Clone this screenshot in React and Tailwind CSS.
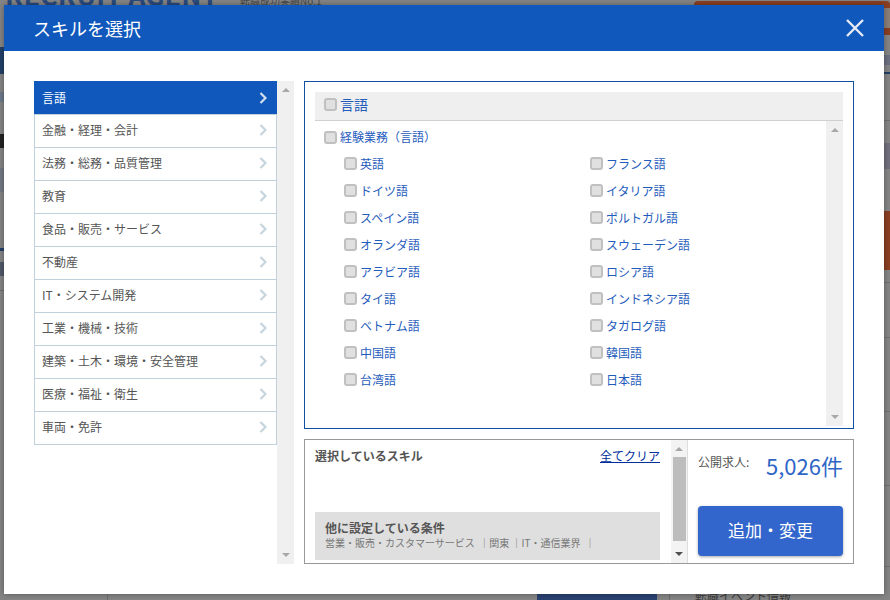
import React from "react";

const categories = [
  "言語",
  "金融・経理・会計",
  "法務・総務・品質管理",
  "教育",
  "食品・販売・サービス",
  "不動産",
  "IT・システム開発",
  "工業・機械・技術",
  "建築・土木・環境・安全管理",
  "医療・福祉・衛生",
  "車両・免許",
];

const languages = [
  ["英語", "フランス語"],
  ["ドイツ語", "イタリア語"],
  ["スペイン語", "ポルトガル語"],
  ["オランダ語", "スウェーデン語"],
  ["アラビア語", "ロシア語"],
  ["タイ語", "インドネシア語"],
  ["ベトナム語", "タガログ語"],
  ["中国語", "韓国語"],
  ["台湾語", "日本語"],
];

const Check = () => (
  <span className="block w-[13px] h-[13px] shrink-0 rounded-[3px] border-2 border-[#c0c0c0] bg-[#e0e0e0]" />
);

const Chevron = ({ color }) => (
  <svg width="8" height="12" viewBox="0 0 8 12" fill="none">
    <path d="M1.5 1l5 5-5 5" stroke={color} strokeWidth="2.2" />
  </svg>
);

const Arrow = ({ down, color = "#a8a8a8" }) => (
  <svg width="8" height="4" viewBox="0 0 8 4">
    <path d={down ? "M0 0h8L4 4z" : "M0 4h8L4 0z"} fill={color} />
  </svg>
);

const LangItem = ({ label }) => (
  <div className="flex items-center gap-[3px] h-[27px]">
    <Check />
    <a className="text-[12px] text-[#1f5cbc]">{label}</a>
  </div>
);

// 背景のページ（オーバーレイで暗くなっている部分）
const Backdrop = () => (
  <>
    <div className="absolute left-[5px] top-[-19px] text-[27px] leading-[28px] font-bold text-[#2a4a7e] whitespace-nowrap">
      RECRUIT AGENT
    </div>
    <div className="absolute left-[240px] top-[-6px] text-[10px] leading-[14px] text-[#4a4a4a] whitespace-nowrap">
      転職成功実績No.1
    </div>
    <div className="absolute left-[694px] top-[1px] w-[196px] h-[34px] rounded-t-[4px] bg-[#8b3f22]" />
    <div className="absolute left-[884px] top-[8px] w-[6px] h-[20px] bg-[#8c8078]" />
    <div className="absolute left-0 top-[47px] w-[4px] h-[27px] bg-[#234069]" />
    <div className="absolute left-0 top-[92px] w-[4px] h-[10px] bg-[#6d7a8c]" />
    <div className="absolute left-0 top-[134px] w-[4px] h-[14px] bg-[#222222]" />
    <div className="absolute left-0 top-[168px] w-[4px] h-[24px] bg-[#747a84]" />
    <div className="absolute left-0 top-[248px] w-[4px] h-[3px] bg-[#234069]" />
    <div className="absolute left-0 top-[262px] w-[4px] h-[14px] bg-[#50586a]" />
    <div className="absolute left-0 top-[290px] w-[4px] h-px bg-[#6e6e6e]" />
    <div className="absolute left-[884px] top-[55px] w-[6px] h-[10px] bg-[#6d7080]" />
    <div className="absolute left-[884px] top-[72px] w-[6px] h-[2px] bg-[#234069]" />
    <div className="absolute left-[884px] top-[120px] w-[6px] h-px bg-[#707070]" />
    <div className="absolute left-[884px] top-[143px] w-[6px] h-[26px] bg-[#72707e]" />
    <div className="absolute left-[884px] top-[211px] w-[6px] h-[59px] bg-[#8b3f22]" />
    <div className="absolute left-[884px] top-[282px] w-[6px] h-px bg-[#707070]" />
    <div className="absolute left-[884px] top-[337px] w-[6px] h-px bg-[#707070]" />
    <div className="absolute left-[884px] top-[411px] w-[6px] h-px bg-[#707070]" />
    <div className="absolute left-[884px] top-[485px] w-[6px] h-px bg-[#707070]" />
    <div className="absolute left-[884px] top-[566px] w-[6px] h-px bg-[#707070]" />
    <div className="absolute left-[107px] top-[594px] w-px h-[6px] bg-[#6e6e6e]" />
    <div className="absolute left-[537px] top-[594px] w-[120px] h-[6px] bg-[#2a4272]" />
    <div className="absolute left-[669px] top-[594px] w-px h-[6px] bg-[#6e6e6e]" />
    <div className="absolute left-[695px] top-[588px] text-[12px] leading-[16px] text-[#3c3c3c] whitespace-nowrap">
      転職イベント情報
    </div>
  </>
);

export default function App() {
  return (
    <div className="relative w-[890px] h-[600px] overflow-hidden bg-[#858585] font-['Noto_Sans_CJK_JP',sans-serif] text-[#555555]">
      <Backdrop />
      <div className="absolute left-[4px] top-[5px] w-[880px] h-[589px] bg-white shadow-[0_0_6px_rgba(0,0,0,0.35)]">
        <div className="flex items-center justify-between h-[46px] pl-[29px] pr-[20px] bg-[#1158bc]">
          <h2 className="text-[18px] text-white">スキルを選択</h2>
          <svg width="18" height="18" viewBox="0 0 18 18" fill="none">
            <path d="M1 1l16 16M17 1L1 17" stroke="#e4ebf4" strokeWidth="2.4" />
          </svg>
        </div>

        <div className="flex gap-[10px] pl-[30px] pt-[30px]">
          {/* カテゴリ一覧 */}
          <div className="flex w-[260px] h-[483px]">
            <ul className="w-[243px] h-fit border-b border-[#c1d1dc]">
              {categories.map((name, i) => (
                <li
                  key={name}
                  className={
                    i === 0
                      ? "flex items-center justify-between h-[33px] pl-[8px] pr-[10px] bg-[#1158bc] text-[12px] text-white"
                      : "flex items-center justify-between h-[33px] pl-[7px] pr-[9px] pb-[2px] border-x border-t border-[#c1d1dc] text-[12px]"
                  }
                >
                  {name}
                  <Chevron color={i === 0 ? "#d3dfef" : "#c6d4de"} />
                </li>
              ))}
            </ul>
            <div className="flex flex-col items-center justify-between w-[17px] py-[7px] bg-[#f0f0f0]">
              <Arrow />
              <Arrow down />
            </div>
          </div>

          <div className="flex flex-col gap-[10px] w-[550px]">
            {/* スキル選択 */}
            <div className="h-[348px] pt-[10px] pl-[10px] pr-[10px] border border-[#1150a0]">
              <div className="flex items-center gap-[3px] h-[29px] pl-[9px] pb-[3px] bg-[#efefef] border-b border-[#d0d0d0] text-[14px] text-[#1f5cbc]">
                <Check />
                言語
              </div>
              <div className="flex justify-between h-[305px]">
                <div className="w-[511px] pl-[9px] pt-[3px]">
                  <div className="flex items-center gap-[3px] h-[26px]">
                    <Check />
                    <a className="text-[12px] text-[#1f5cbc]">経験業務（言語）</a>
                  </div>
                  <div className="pl-[20px]">
                    {languages.map(([a, b]) => (
                      <div key={a} className="grid grid-cols-[246px_1fr]">
                        <LangItem label={a} />
                        <LangItem label={b} />
                      </div>
                    ))}
                  </div>
                </div>
                <div className="flex flex-col shrink-0 items-center justify-between w-[17px] py-[7px] bg-[#f0f0f0]">
                  <Arrow />
                  <Arrow down />
                </div>
              </div>
            </div>

            {/* 選択中 */}
            <div className="flex h-[125px] border border-[#999999]">
              <div className="w-[366px] pl-[10px] pr-[11px]">
                <div className="flex items-center justify-between h-[32px]">
                  <span className="text-[12px] font-bold">選択しているスキル</span>
                  <a className="text-[12px] text-[#002e9c] underline">全てクリア</a>
                </div>
                <div className="mt-[40px] h-[48px] pl-[10px] pt-[8px] bg-[#dfdfdf]">
                  <p className="text-[12px] leading-[16px] font-bold">他に設定している条件</p>
                  <p className="text-[10px] leading-[14px] text-[#777777] whitespace-pre">
                    {"営業・販売・カスタマーサービス  ｜関東 ｜IT・通信業界  ｜"}
                  </p>
                </div>
              </div>
              <div className="flex flex-col items-center w-[17px] border-r border-[#dddddd] bg-[#f3f3f3]">
                <div className="flex items-center h-[17px]">
                  <Arrow />
                </div>
                <div className="w-[13px] h-[84px] bg-[#bdbdbd]" />
                <div className="flex items-center h-[22px] pt-[3px]">
                  <Arrow down color="#505050" />
                </div>
              </div>
              <div className="flex-1 pl-[10px] pr-[10px]">
                <div className="flex justify-between h-[66px] pt-[12px]">
                  <span className="text-[12px] leading-[20px]">公開求人:</span>
                  <span className="text-[22px] leading-[27px] text-[#2f66c6]">5,026件</span>
                </div>
                <button className="w-[145px] h-[50px] pb-[2px] rounded-[4px] bg-[#3266cc] text-[17px] text-white shadow-[0_1px_3px_rgba(0,0,0,0.35)]">
                  追加・変更
                </button>
              </div>
            </div>
          </div>
        </div>
      </div>
    </div>
  );
}
